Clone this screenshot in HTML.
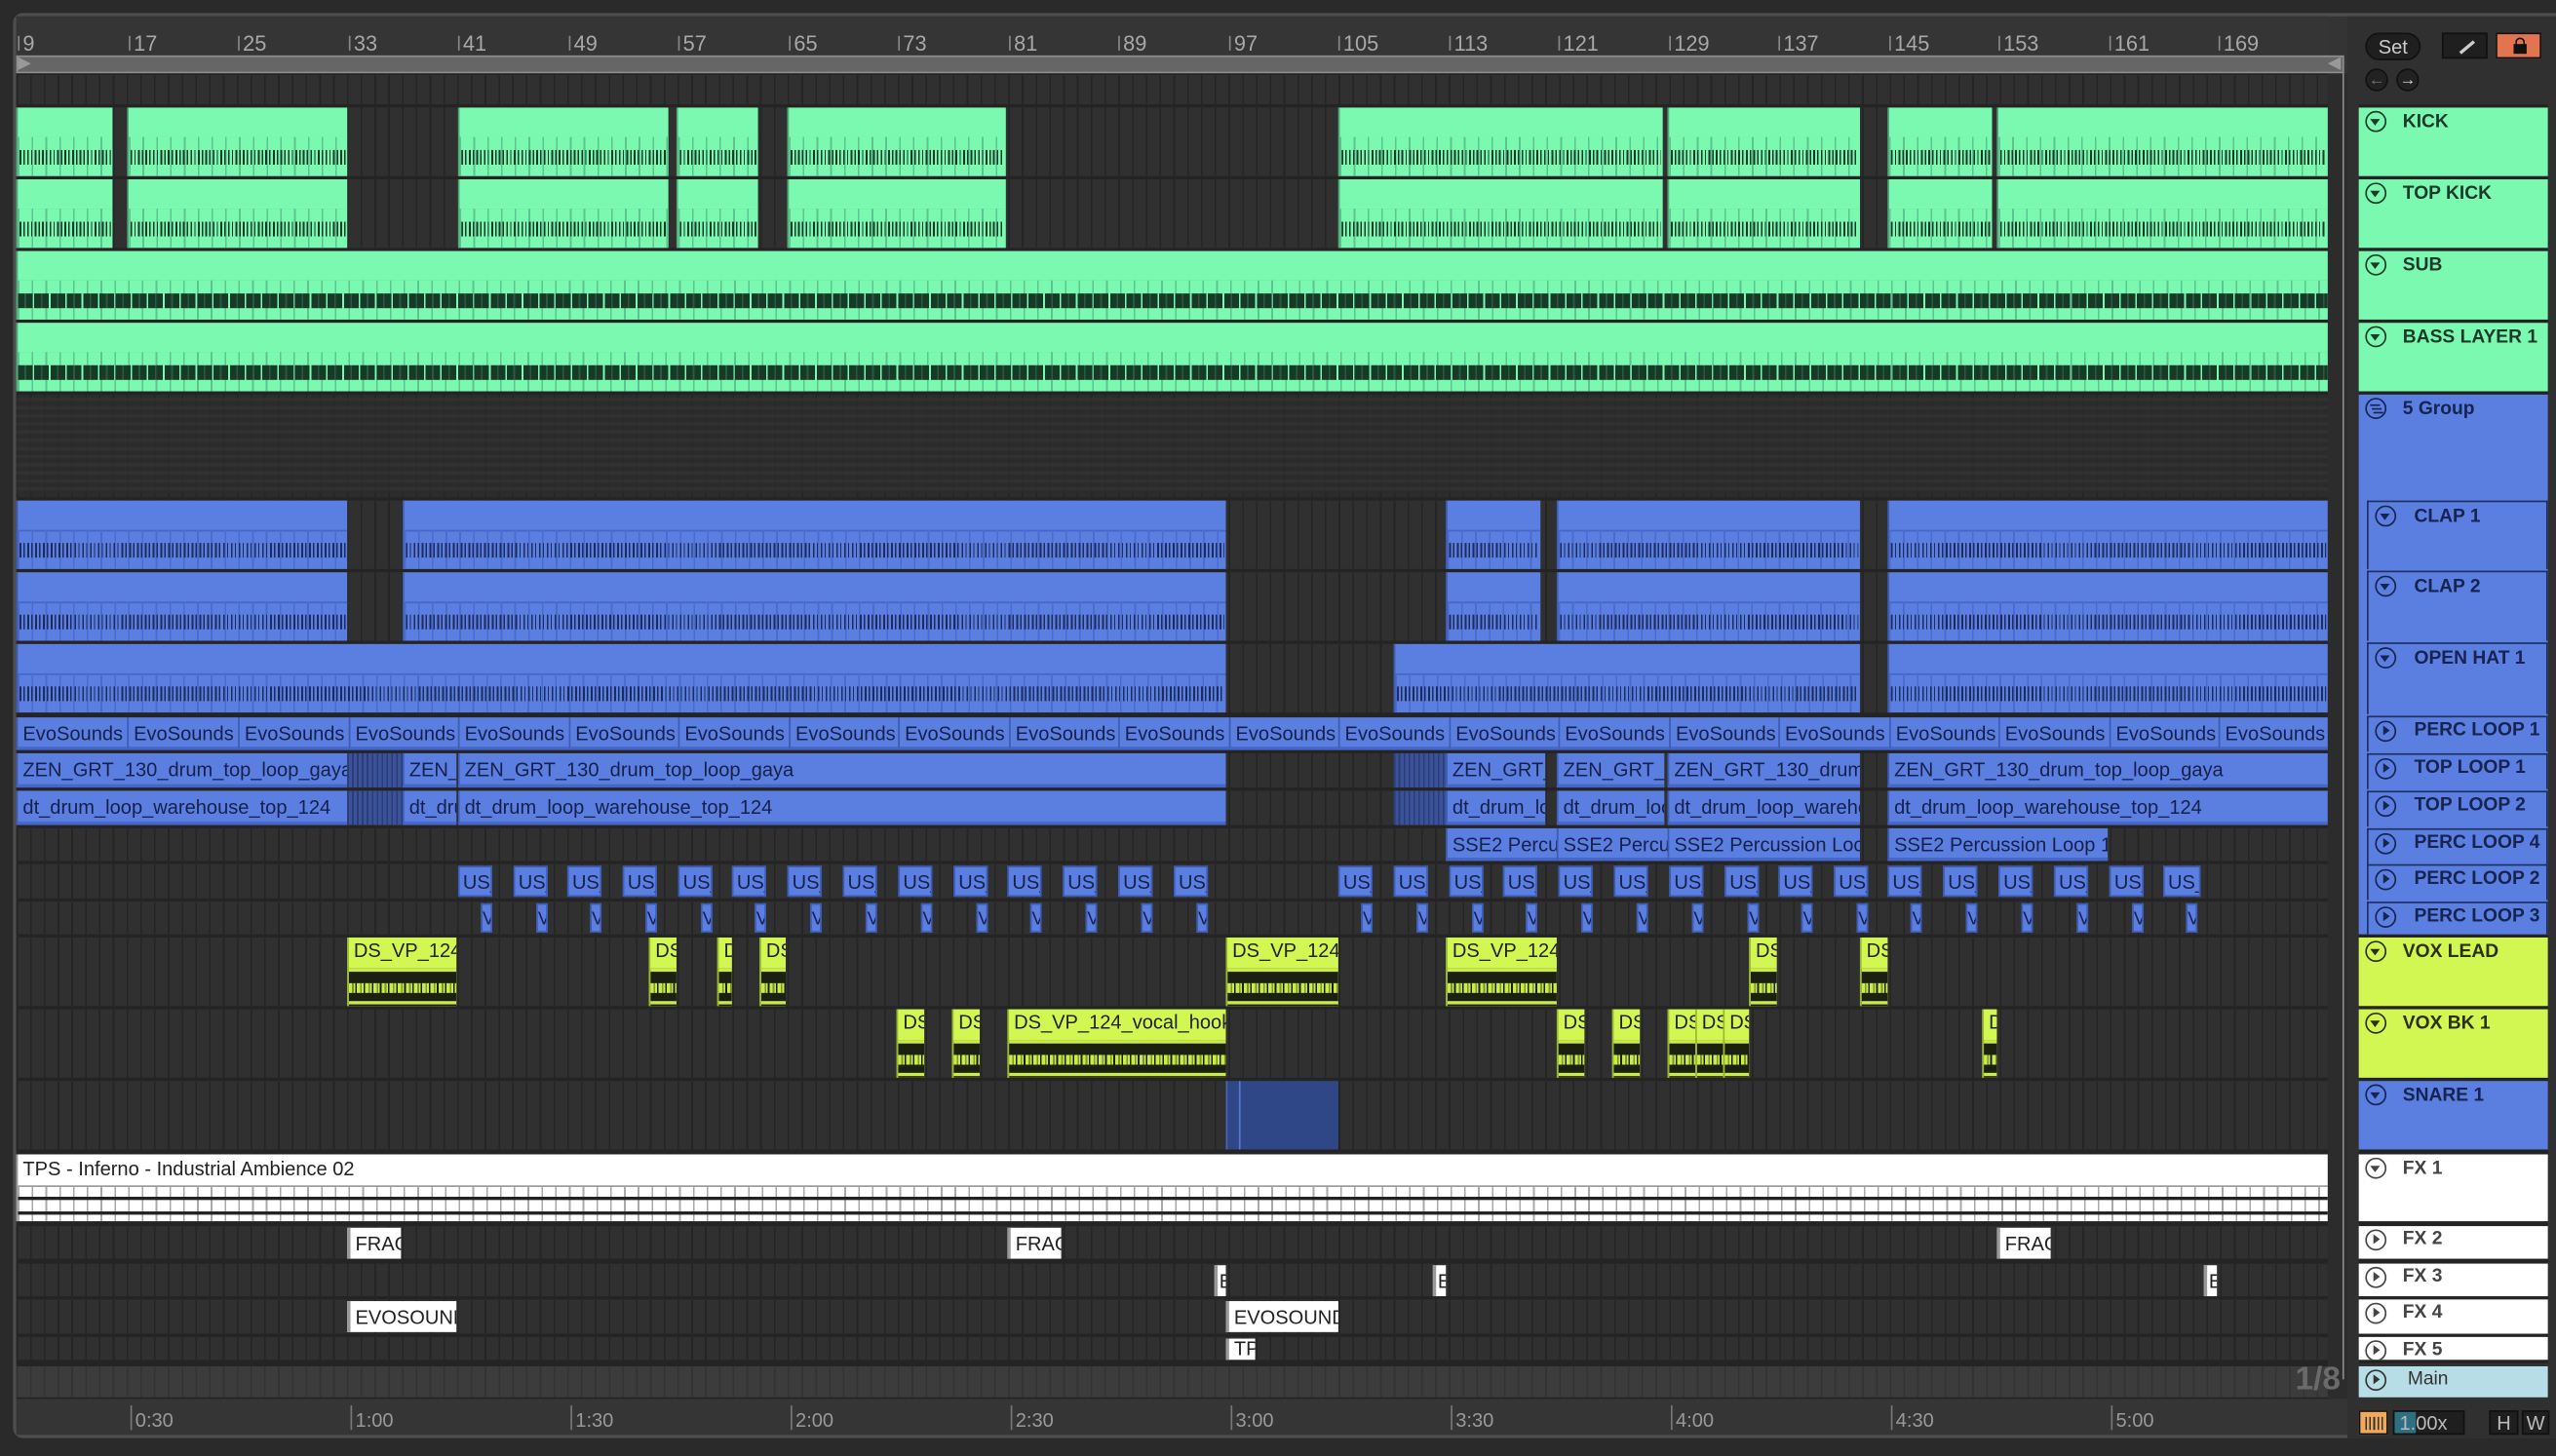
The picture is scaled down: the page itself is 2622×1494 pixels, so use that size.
<!DOCTYPE html>
<html><head><meta charset="utf-8">
<style>
html,body{margin:0;padding:0;background:#2a2a2a;overflow:hidden;width:2622px;height:1494px}
#s{position:absolute;left:0;top:0;width:1568px;height:893px;transform:scale(1.67219,1.67301);transform-origin:0 0;font-family:"Liberation Sans",sans-serif}
.a{position:absolute;box-sizing:border-box}
.row{position:absolute;left:10px;width:1418px;background:#303030 repeating-linear-gradient(90deg,#252525 0 1px,transparent 1px 8.45px);}
.c{position:absolute;box-sizing:border-box;overflow:hidden;white-space:nowrap}
.g{background:#7cf9b1;border-left:1px solid #4fa877}
.g .h{position:absolute;left:0;right:0;top:0;height:44%;background:#7cf9b1;border-bottom:1px solid #53b07d}
.g .b{position:absolute;left:0;right:0;top:44%;bottom:0;background:#7cf9b1 repeating-linear-gradient(90deg,#5cc48e 0 1px,transparent 1px 8.45px)}
.g .n{position:absolute;left:1px;right:1px;top:30%;height:40%;background:repeating-linear-gradient(90deg,#163a26 0 1.1px,transparent 1.1px 2.4px,#163a26 2.4px 3.2px,transparent 3.2px 4.6px)}
.g .nb{position:absolute;left:0;right:0;top:30%;height:40%;background:repeating-linear-gradient(90deg,#163a26 0 4px,#2a5a3e 4px 5px,#163a26 5px 9px,transparent 9px 10px)}
.bl{background:#5b7fe0;border-left:1px solid #3d5cb4}
.bl .h{position:absolute;left:0;right:0;top:0;height:44%;border-bottom:1px solid #4566c4}
.bl .b{position:absolute;left:0;right:0;top:44%;bottom:0;background:repeating-linear-gradient(90deg,#4a6cd0 0 1px,transparent 1px 8.45px)}
.bl .n{position:absolute;left:1px;right:1px;top:30%;height:40%;background:repeating-linear-gradient(90deg,#1d2c5a 0 1.1px,transparent 1.1px 2.4px,#1d2c5a 2.4px 3.2px,transparent 3.2px 4.8px)}
.t{font-size:12px;line-height:20px;padding-left:3px;color:#16204a;background:#5b7fe0;border-left:1px solid #3d5cb4;border-bottom:2px solid #4666c8}
.hatch{background:#3b5299 repeating-linear-gradient(90deg,#2b3d78 0 1px,transparent 1px 3px)}
.y{background:#d3f752;border-left:1px solid #9ab82e}
.y .l{font-size:12px;line-height:17px;padding-left:3px;color:#222}
.y .w{position:absolute;left:0;right:0;top:19px;bottom:0;background:#1c2010}
.y .w:before{content:"";position:absolute;left:0;right:0;top:40%;height:6px;background:repeating-linear-gradient(90deg,#c9ec4a 0 2px,#7d9530 2px 3px,#c9ec4a 3px 4px,#1c2010 4px 5px)}
.y .w:after{content:"";position:absolute;left:0;right:0;top:0;height:2px;background:#c9ec4a;box-shadow:0 20px 0 #c9ec4a}
.wh{background:#fff;border-left:2px solid #999;font-size:12px;line-height:20px;padding-left:3px;color:#222}
.us{font-size:12px;line-height:18px;padding-left:2px;color:#16204a;background:#5b7fe0;border:1px solid #3d5cb4}
.v{background:#5b7fe0;border:1px solid #3d5cb4;font-size:11px;color:#16204a;line-height:18px}
.rn{position:absolute;top:19px;font-size:13px;color:#a8a8a8}
.rt{position:absolute;top:22px;width:1px;height:9px;background:#888}
.tl{position:absolute;top:862px;font-size:12px;color:#999;border-left:1px solid #777;padding-left:2px;line-height:12px;padding-top:3px}
.hd{position:absolute;left:1447px;width:116px;box-sizing:border-box;font-weight:bold;font-size:11.5px;padding-left:27px;padding-top:3px;white-space:nowrap;overflow:hidden}
.ic{position:absolute;left:4px;top:2px;width:13px;height:13px;border:1.4px solid currentColor;border-radius:50%;box-sizing:border-box}
.ic.d:after{content:"";position:absolute;left:2.3px;top:3.5px;border-left:3.3px solid transparent;border-right:3.3px solid transparent;border-top:4px solid currentColor}
.ic.p:after{content:"";position:absolute;left:3.6px;top:2.2px;border-top:3.3px solid transparent;border-bottom:3.3px solid transparent;border-left:4.5px solid currentColor}
.gr{background:#7cf9b1;color:#1c3a2a}
.bh{background:#5b7fe0;color:#172350}
.yh{background:#d3f752;color:#2a3010}
.whh{background:#fff;color:#444}
.sep{position:absolute;left:1428px;width:19px;background:#2c2c2c}
</style></head><body><div id="s">
<div class="a" style="left:8px;top:8px;width:1580px;height:874px;border:2px solid #4e4e4e;border-radius:6px;background:#343434"></div>
<div class="a" style="left:10px;top:10px;width:1418px;height:24px;background:#353535"></div>
<div class="rt" style="left:11px"></div><div class="rn" style="left:14px">9</div>
<div class="rt" style="left:79px"></div><div class="rn" style="left:82px">17</div>
<div class="rt" style="left:146px"></div><div class="rn" style="left:149px">25</div>
<div class="rt" style="left:214px"></div><div class="rn" style="left:217px">33</div>
<div class="rt" style="left:281px"></div><div class="rn" style="left:284px">41</div>
<div class="rt" style="left:349px"></div><div class="rn" style="left:352px">49</div>
<div class="rt" style="left:416px"></div><div class="rn" style="left:419px">57</div>
<div class="rt" style="left:484px"></div><div class="rn" style="left:487px">65</div>
<div class="rt" style="left:551px"></div><div class="rn" style="left:554px">73</div>
<div class="rt" style="left:619px"></div><div class="rn" style="left:622px">81</div>
<div class="rt" style="left:686px"></div><div class="rn" style="left:689px">89</div>
<div class="rt" style="left:754px"></div><div class="rn" style="left:757px">97</div>
<div class="rt" style="left:821px"></div><div class="rn" style="left:824px">105</div>
<div class="rt" style="left:889px"></div><div class="rn" style="left:892px">113</div>
<div class="rt" style="left:956px"></div><div class="rn" style="left:959px">121</div>
<div class="rt" style="left:1024px"></div><div class="rn" style="left:1027px">129</div>
<div class="rt" style="left:1091px"></div><div class="rn" style="left:1094px">137</div>
<div class="rt" style="left:1159px"></div><div class="rn" style="left:1162px">145</div>
<div class="rt" style="left:1226px"></div><div class="rn" style="left:1229px">153</div>
<div class="rt" style="left:1294px"></div><div class="rn" style="left:1297px">161</div>
<div class="rt" style="left:1361px"></div><div class="rn" style="left:1364px">169</div>
<div class="a" style="left:10px;top:34px;width:1428px;height:11px;background:#666;border:1px solid #8e8e8e"></div>
<div class="a" style="left:11px;top:35px;width:0;height:0;border-top:4.5px solid transparent;border-bottom:4.5px solid transparent;border-left:8px solid #999"></div>
<div class="a" style="left:1428px;top:35px;width:0;height:0;border-top:4.5px solid transparent;border-bottom:4.5px solid transparent;border-right:8px solid #999"></div>
<div class="a" style="left:10px;top:45px;width:1418px;height:813px;background:#242424"></div>
<div class="row" style="top:46px;height:18px"></div>
<div class="row" style="top:66px;height:42px"></div>
<div class="row" style="top:110px;height:42px"></div>
<div class="row" style="top:154px;height:42px"></div>
<div class="row" style="top:198px;height:42px"></div>
<div class="row" style="top:242px;height:63px;background-color:#2c2c2c"></div>
<div class="row" style="top:307px;height:42px"></div>
<div class="row" style="top:351px;height:42px"></div>
<div class="row" style="top:395px;height:42px"></div>
<div class="row" style="top:440px;height:20px"></div>
<div class="row" style="top:462px;height:21px"></div>
<div class="row" style="top:485px;height:21px"></div>
<div class="row" style="top:508px;height:20px"></div>
<div class="row" style="top:530px;height:21px"></div>
<div class="row" style="top:553px;height:20px"></div>
<div class="row" style="top:575px;height:42px"></div>
<div class="row" style="top:619px;height:42px"></div>
<div class="row" style="top:663px;height:42px"></div>
<div class="row" style="top:708px;height:41px"></div>
<div class="row" style="top:752px;height:20px"></div>
<div class="row" style="top:775px;height:20px"></div>
<div class="row" style="top:797px;height:21px"></div>
<div class="row" style="top:820px;height:14px"></div>
<div class="row" style="top:838px;height:19px;background-color:#3c3c3c;background-image:repeating-linear-gradient(90deg,#333 0 1px,transparent 1px 8.45px)"></div>
<div class="a" style="left:10px;top:244px;width:1418px;height:59px;background:repeating-linear-gradient(180deg,#333 0 2px,#2b2b2b 2px 5px);opacity:.7"></div>

<div class="c g" style="left:10px;top:66px;width:59px;height:42px"><div class="h"></div><div class="b"><div class="n"></div></div></div>
<div class="c g" style="left:78px;top:66px;width:135px;height:42px"><div class="h"></div><div class="b"><div class="n"></div></div></div>
<div class="c g" style="left:281px;top:66px;width:129px;height:42px"><div class="h"></div><div class="b"><div class="n"></div></div></div>
<div class="c g" style="left:415px;top:66px;width:50px;height:42px"><div class="h"></div><div class="b"><div class="n"></div></div></div>
<div class="c g" style="left:483px;top:66px;width:134px;height:42px"><div class="h"></div><div class="b"><div class="n"></div></div></div>
<div class="c g" style="left:821px;top:66px;width:199px;height:42px"><div class="h"></div><div class="b"><div class="n"></div></div></div>
<div class="c g" style="left:1023px;top:66px;width:118px;height:42px"><div class="h"></div><div class="b"><div class="n"></div></div></div>
<div class="c g" style="left:1158px;top:66px;width:64px;height:42px"><div class="h"></div><div class="b"><div class="n"></div></div></div>
<div class="c g" style="left:1225px;top:66px;width:203px;height:42px"><div class="h"></div><div class="b"><div class="n"></div></div></div>

<div class="c g" style="left:10px;top:110px;width:59px;height:42px"><div class="h"></div><div class="b"><div class="n"></div></div></div>
<div class="c g" style="left:78px;top:110px;width:135px;height:42px"><div class="h"></div><div class="b"><div class="n"></div></div></div>
<div class="c g" style="left:281px;top:110px;width:129px;height:42px"><div class="h"></div><div class="b"><div class="n"></div></div></div>
<div class="c g" style="left:415px;top:110px;width:50px;height:42px"><div class="h"></div><div class="b"><div class="n"></div></div></div>
<div class="c g" style="left:483px;top:110px;width:134px;height:42px"><div class="h"></div><div class="b"><div class="n"></div></div></div>
<div class="c g" style="left:821px;top:110px;width:199px;height:42px"><div class="h"></div><div class="b"><div class="n"></div></div></div>
<div class="c g" style="left:1023px;top:110px;width:118px;height:42px"><div class="h"></div><div class="b"><div class="n"></div></div></div>
<div class="c g" style="left:1158px;top:110px;width:64px;height:42px"><div class="h"></div><div class="b"><div class="n"></div></div></div>
<div class="c g" style="left:1225px;top:110px;width:203px;height:42px"><div class="h"></div><div class="b"><div class="n"></div></div></div>
<div class="c g" style="left:10px;top:154px;width:1418px;height:42px"><div class="h"></div><div class="b"><div class="nb"></div></div></div>
<div class="c g" style="left:10px;top:198px;width:1418px;height:42px"><div class="h"></div><div class="b"><div class="nb"></div></div></div>

<div class="c bl" style="left:10px;top:307px;width:203px;height:42px"><div class="h"></div><div class="b"><div class="n"></div></div></div>
<div class="c bl" style="left:247px;top:307px;width:505px;height:42px"><div class="h"></div><div class="b"><div class="n"></div></div></div>
<div class="c bl" style="left:887px;top:307px;width:58px;height:42px"><div class="h"></div><div class="b"><div class="n"></div></div></div>
<div class="c bl" style="left:955px;top:307px;width:186px;height:42px"><div class="h"></div><div class="b"><div class="n"></div></div></div>
<div class="c bl" style="left:1158px;top:307px;width:270px;height:42px"><div class="h"></div><div class="b"><div class="n"></div></div></div>
<div class="c bl" style="left:10px;top:351px;width:203px;height:42px"><div class="h"></div><div class="b"><div class="n"></div></div></div>
<div class="c bl" style="left:247px;top:351px;width:505px;height:42px"><div class="h"></div><div class="b"><div class="n"></div></div></div>
<div class="c bl" style="left:887px;top:351px;width:58px;height:42px"><div class="h"></div><div class="b"><div class="n"></div></div></div>
<div class="c bl" style="left:955px;top:351px;width:186px;height:42px"><div class="h"></div><div class="b"><div class="n"></div></div></div>
<div class="c bl" style="left:1158px;top:351px;width:270px;height:42px"><div class="h"></div><div class="b"><div class="n"></div></div></div>
<div class="c bl" style="left:10px;top:395px;width:742px;height:42px"><div class="h"></div><div class="b"><div class="n"></div></div></div>
<div class="c bl" style="left:855px;top:395px;width:286px;height:42px"><div class="h"></div><div class="b"><div class="n"></div></div></div>
<div class="c bl" style="left:1158px;top:395px;width:270px;height:42px"><div class="h"></div><div class="b"><div class="n"></div></div></div>

<div class="c t" style="left:10px;top:440px;width:68px;height:20px">EvoSounds</div>
<div class="c t" style="left:78px;top:440px;width:68px;height:20px">EvoSounds</div>
<div class="c t" style="left:146px;top:440px;width:68px;height:20px">EvoSounds</div>
<div class="c t" style="left:214px;top:440px;width:67px;height:20px">EvoSounds</div>
<div class="c t" style="left:281px;top:440px;width:68px;height:20px">EvoSounds</div>
<div class="c t" style="left:349px;top:440px;width:67px;height:20px">EvoSounds</div>
<div class="c t" style="left:416px;top:440px;width:68px;height:20px">EvoSounds</div>
<div class="c t" style="left:484px;top:440px;width:67px;height:20px">EvoSounds</div>
<div class="c t" style="left:551px;top:440px;width:68px;height:20px">EvoSounds</div>
<div class="c t" style="left:619px;top:440px;width:67px;height:20px">EvoSounds</div>
<div class="c t" style="left:686px;top:440px;width:68px;height:20px">EvoSounds</div>
<div class="c t" style="left:754px;top:440px;width:67px;height:20px">EvoSounds</div>
<div class="c t" style="left:821px;top:440px;width:68px;height:20px">EvoSounds</div>
<div class="c t" style="left:889px;top:440px;width:67px;height:20px">EvoSounds</div>
<div class="c t" style="left:956px;top:440px;width:68px;height:20px">EvoSounds</div>
<div class="c t" style="left:1024px;top:440px;width:67px;height:20px">EvoSounds</div>
<div class="c t" style="left:1091px;top:440px;width:68px;height:20px">EvoSounds</div>
<div class="c t" style="left:1159px;top:440px;width:67px;height:20px">EvoSounds</div>
<div class="c t" style="left:1226px;top:440px;width:68px;height:20px">EvoSounds</div>
<div class="c t" style="left:1294px;top:440px;width:67px;height:20px">EvoSounds</div>
<div class="c t" style="left:1361px;top:440px;width:67px;height:20px">EvoSounds</div>
<div class="c t" style="left:10px;top:462px;width:203px;height:21px">ZEN_GRT_130_drum_top_loop_gaya</div>
<div class="c hatch" style="left:213px;top:462px;width:34px;height:21px"></div>
<div class="c t" style="left:247px;top:462px;width:33px;height:21px">ZEN_</div>
<div class="c t" style="left:281px;top:462px;width:471px;height:21px">ZEN_GRT_130_drum_top_loop_gaya</div>
<div class="c hatch" style="left:855px;top:462px;width:32px;height:21px"></div>
<div class="c t" style="left:887px;top:462px;width:61px;height:21px">ZEN_GRT_130</div>
<div class="c t" style="left:955px;top:462px;width:66px;height:21px">ZEN_GRT_130</div>
<div class="c t" style="left:1023px;top:462px;width:118px;height:21px">ZEN_GRT_130_drum_top</div>
<div class="c t" style="left:1158px;top:462px;width:270px;height:21px">ZEN_GRT_130_drum_top_loop_gaya</div>
<div class="c t" style="left:10px;top:485px;width:203px;height:21px">dt_drum_loop_warehouse_top_124</div>
<div class="c hatch" style="left:213px;top:485px;width:34px;height:21px"></div>
<div class="c t" style="left:247px;top:485px;width:33px;height:21px">dt_drum</div>
<div class="c t" style="left:281px;top:485px;width:471px;height:21px">dt_drum_loop_warehouse_top_124</div>
<div class="c hatch" style="left:855px;top:485px;width:32px;height:21px"></div>
<div class="c t" style="left:887px;top:485px;width:61px;height:21px">dt_drum_loop</div>
<div class="c t" style="left:955px;top:485px;width:66px;height:21px">dt_drum_loop</div>
<div class="c t" style="left:1023px;top:485px;width:118px;height:21px">dt_drum_loop_warehouse</div>
<div class="c t" style="left:1158px;top:485px;width:270px;height:21px">dt_drum_loop_warehouse_top_124</div>
<div class="c t" style="left:887px;top:508px;width:68px;height:20px">SSE2 Percussion</div>
<div class="c t" style="left:955px;top:508px;width:68px;height:20px">SSE2 Percussion</div>
<div class="c t" style="left:1023px;top:508px;width:118px;height:20px">SSE2 Percussion Loop 1</div>
<div class="c t" style="left:1158px;top:508px;width:135px;height:20px">SSE2 Percussion Loop 1</div>
<div class="c us" style="left:281px;top:531px;width:21px;height:19px">US_</div>
<div class="c us" style="left:315px;top:531px;width:21px;height:19px">US_</div>
<div class="c us" style="left:348px;top:531px;width:21px;height:19px">US_</div>
<div class="c us" style="left:382px;top:531px;width:21px;height:19px">US_</div>
<div class="c us" style="left:416px;top:531px;width:21px;height:19px">US_</div>
<div class="c us" style="left:449px;top:531px;width:21px;height:19px">US_</div>
<div class="c us" style="left:483px;top:531px;width:21px;height:19px">US_</div>
<div class="c us" style="left:517px;top:531px;width:21px;height:19px">US_</div>
<div class="c us" style="left:551px;top:531px;width:21px;height:19px">US_</div>
<div class="c us" style="left:585px;top:531px;width:21px;height:19px">US_</div>
<div class="c us" style="left:618px;top:531px;width:21px;height:19px">US_</div>
<div class="c us" style="left:652px;top:531px;width:21px;height:19px">US_</div>
<div class="c us" style="left:686px;top:531px;width:21px;height:19px">US_</div>
<div class="c us" style="left:720px;top:531px;width:21px;height:19px">US_</div>
<div class="c us" style="left:821px;top:531px;width:21px;height:19px">US_</div>
<div class="c us" style="left:855px;top:531px;width:21px;height:19px">US_</div>
<div class="c us" style="left:889px;top:531px;width:21px;height:19px">US_</div>
<div class="c us" style="left:922px;top:531px;width:21px;height:19px">US_</div>
<div class="c us" style="left:956px;top:531px;width:21px;height:19px">US_</div>
<div class="c us" style="left:990px;top:531px;width:21px;height:19px">US_</div>
<div class="c us" style="left:1024px;top:531px;width:21px;height:19px">US_</div>
<div class="c us" style="left:1058px;top:531px;width:21px;height:19px">US_</div>
<div class="c us" style="left:1091px;top:531px;width:21px;height:19px">US_</div>
<div class="c us" style="left:1125px;top:531px;width:21px;height:19px">US_</div>
<div class="c us" style="left:1158px;top:531px;width:21px;height:19px">US_</div>
<div class="c us" style="left:1192px;top:531px;width:21px;height:19px">US_</div>
<div class="c us" style="left:1226px;top:531px;width:21px;height:19px">US_</div>
<div class="c us" style="left:1260px;top:531px;width:21px;height:19px">US_</div>
<div class="c us" style="left:1294px;top:531px;width:21px;height:19px">US_</div>
<div class="c us" style="left:1327px;top:531px;width:23px;height:19px">US_</div>
<div class="c v" style="left:295px;top:554px;width:7px;height:18px">V</div>
<div class="c v" style="left:329px;top:554px;width:7px;height:18px">V</div>
<div class="c v" style="left:362px;top:554px;width:7px;height:18px">V</div>
<div class="c v" style="left:396px;top:554px;width:7px;height:18px">V</div>
<div class="c v" style="left:430px;top:554px;width:7px;height:18px">V</div>
<div class="c v" style="left:463px;top:554px;width:7px;height:18px">V</div>
<div class="c v" style="left:497px;top:554px;width:7px;height:18px">V</div>
<div class="c v" style="left:531px;top:554px;width:7px;height:18px">V</div>
<div class="c v" style="left:565px;top:554px;width:7px;height:18px">V</div>
<div class="c v" style="left:599px;top:554px;width:7px;height:18px">V</div>
<div class="c v" style="left:632px;top:554px;width:7px;height:18px">V</div>
<div class="c v" style="left:666px;top:554px;width:7px;height:18px">V</div>
<div class="c v" style="left:700px;top:554px;width:7px;height:18px">V</div>
<div class="c v" style="left:734px;top:554px;width:7px;height:18px">V</div>
<div class="c v" style="left:835px;top:554px;width:7px;height:18px">V</div>
<div class="c v" style="left:869px;top:554px;width:7px;height:18px">V</div>
<div class="c v" style="left:903px;top:554px;width:7px;height:18px">V</div>
<div class="c v" style="left:936px;top:554px;width:7px;height:18px">V</div>
<div class="c v" style="left:970px;top:554px;width:7px;height:18px">V</div>
<div class="c v" style="left:1004px;top:554px;width:7px;height:18px">V</div>
<div class="c v" style="left:1038px;top:554px;width:7px;height:18px">V</div>
<div class="c v" style="left:1072px;top:554px;width:7px;height:18px">V</div>
<div class="c v" style="left:1105px;top:554px;width:7px;height:18px">V</div>
<div class="c v" style="left:1139px;top:554px;width:7px;height:18px">V</div>
<div class="c v" style="left:1172px;top:554px;width:7px;height:18px">V</div>
<div class="c v" style="left:1206px;top:554px;width:7px;height:18px">V</div>
<div class="c v" style="left:1240px;top:554px;width:7px;height:18px">V</div>
<div class="c v" style="left:1274px;top:554px;width:7px;height:18px">V</div>
<div class="c v" style="left:1308px;top:554px;width:7px;height:18px">V</div>
<div class="c v" style="left:1341px;top:554px;width:7px;height:18px">V</div>
<div class="c y" style="left:213px;top:575px;width:67px;height:42px"><div class="l">DS_VP_124</div><div class="w"></div></div>
<div class="c y" style="left:398px;top:575px;width:17px;height:42px"><div class="l">DS</div><div class="w"></div></div>
<div class="c y" style="left:440px;top:575px;width:9px;height:42px"><div class="l">D</div><div class="w"></div></div>
<div class="c y" style="left:466px;top:575px;width:16px;height:42px"><div class="l">DS</div><div class="w"></div></div>
<div class="c y" style="left:752px;top:575px;width:69px;height:42px"><div class="l">DS_VP_124</div><div class="w"></div></div>
<div class="c y" style="left:887px;top:575px;width:68px;height:42px"><div class="l">DS_VP_124</div><div class="w"></div></div>
<div class="c y" style="left:1073px;top:575px;width:17px;height:42px"><div class="l">DS</div><div class="w"></div></div>
<div class="c y" style="left:1141px;top:575px;width:17px;height:42px"><div class="l">DS</div><div class="w"></div></div>
<div class="c y" style="left:550px;top:619px;width:17px;height:42px"><div class="l">DS</div><div class="w"></div></div>
<div class="c y" style="left:584px;top:619px;width:17px;height:42px"><div class="l">DS</div><div class="w"></div></div>
<div class="c y" style="left:618px;top:619px;width:134px;height:42px"><div class="l">DS_VP_124_vocal_hook</div><div class="w"></div></div>
<div class="c y" style="left:955px;top:619px;width:17px;height:42px"><div class="l">DS</div><div class="w"></div></div>
<div class="c y" style="left:989px;top:619px;width:17px;height:42px"><div class="l">DS</div><div class="w"></div></div>
<div class="c y" style="left:1023px;top:619px;width:17px;height:42px"><div class="l">DS</div><div class="w"></div></div>
<div class="c y" style="left:1040px;top:619px;width:17px;height:42px"><div class="l">DS</div><div class="w"></div></div>
<div class="c y" style="left:1057px;top:619px;width:16px;height:42px"><div class="l">DS</div><div class="w"></div></div>
<div class="c y" style="left:1216px;top:619px;width:9px;height:42px"><div class="l">D</div><div class="w"></div></div>
<div class="c" style="left:752px;top:663px;width:69px;height:42px;background:#2f4787;border-left:1px solid #4a64b0"></div>
<div class="a" style="left:760px;top:663px;width:1px;height:42px;background:#5a78d0"></div>
<div class="c" style="left:10px;top:708px;width:1418px;height:41px;background:#fff;border-left:1px solid #999">
<div style="font-size:12px;line-height:19px;padding-left:3px;color:#222;height:19px;border-bottom:1px solid #999">TPS - Inferno - Industrial Ambience 02</div>
<div style="position:absolute;left:0;right:0;top:20px;bottom:0;background:repeating-linear-gradient(90deg,#aaa 0 1px,transparent 1px 8.45px)"></div>
<div style="position:absolute;left:0;right:0;top:26px;height:2px;background:#222"></div>
<div style="position:absolute;left:0;right:0;top:35px;height:2px;background:#222"></div>
</div>
<div class="c wh" style="left:213px;top:753px;width:33px;height:19px">FRAG</div>
<div class="c wh" style="left:618px;top:753px;width:33px;height:19px">FRAG</div>
<div class="c wh" style="left:1225px;top:753px;width:33px;height:19px">FRAG</div>
<div class="c wh" style="left:745px;top:776px;width:7px;height:19px;padding-left:1px">E</div>
<div class="c wh" style="left:879px;top:776px;width:8px;height:19px;padding-left:1px">E</div>
<div class="c wh" style="left:1352px;top:776px;width:8px;height:19px;padding-left:1px">E</div>
<div class="c wh" style="left:213px;top:798px;width:67px;height:19px">EVOSOUNDS</div>
<div class="c wh" style="left:752px;top:798px;width:69px;height:19px">EVOSOUNDS</div>
<div class="c wh" style="left:752px;top:821px;width:18px;height:13px;line-height:13px">TPS</div>
<div class="sep" style="top:45px;height:813px"></div>
<div class="a" style="left:1408px;top:835px;font-size:20px;font-weight:bold;color:#6a6a6a">1/8</div>
<div class="a" style="left:1437px;top:34px;width:1px;height:812px;background:#8a8a8a"></div>
<div class="a" style="left:10px;top:858px;width:1438px;height:22px;background:#353535"></div>
<div class="tl" style="left:80px">0:30</div><div class="tl" style="left:215px">1:00</div><div class="tl" style="left:350px">1:30</div><div class="tl" style="left:485px">2:00</div><div class="tl" style="left:620px">2:30</div><div class="tl" style="left:755px">3:00</div><div class="tl" style="left:890px">3:30</div><div class="tl" style="left:1025px">4:00</div><div class="tl" style="left:1160px">4:30</div><div class="tl" style="left:1295px">5:00</div>

<div class="a" style="left:1440px;top:10px;width:128px;height:872px;background:#303030"></div>
<div class="a" style="left:1451px;top:20px;width:34px;height:17px;border-radius:9px;background:#1f1f1f;border:1px solid #111;color:#ccc;font-size:12px;text-align:center;line-height:16px">Set</div>
<div class="a" style="left:1498px;top:20px;width:28px;height:16px;background:#1f1f1f;border:1px solid #111"><div style="position:absolute;left:9px;top:7px;width:11px;height:2px;background:#ccc;transform:rotate(-40deg)"></div></div>
<div class="a" style="left:1531px;top:20px;width:28px;height:16px;background:#e2744f;border:1px solid #111"><div style="position:absolute;left:10px;top:6px;width:8px;height:6px;background:#111"></div><div style="position:absolute;left:11px;top:2px;width:4px;height:5px;border:1.5px solid #111;border-bottom:none;border-radius:3px 3px 0 0"></div></div>
<div class="a" style="left:1451px;top:42px;width:14px;height:14px;border-radius:50%;background:#222;border:1px solid #111;color:#777;font-size:10px;text-align:center;line-height:14px">&#8592;</div>
<div class="a" style="left:1470px;top:42px;width:14px;height:14px;border-radius:50%;background:#222;border:1px solid #111;color:#ddd;font-size:10px;text-align:center;line-height:14px">&#8594;</div>

<div class="a" style="left:1447px;top:64px;width:116px;height:772px;background:#232323"></div>
<div class="hd gr" style="top:66px;height:42px"><span class="ic d"></span>KICK</div>
<div class="hd gr" style="top:110px;height:42px"><span class="ic d"></span>TOP KICK</div>
<div class="hd gr" style="top:154px;height:42px"><span class="ic d"></span>SUB</div>
<div class="hd gr" style="top:198px;height:42px"><span class="ic d"></span>BASS LAYER 1</div>
<div class="hd bh" style="top:242px;height:331px"><span class="ic"><span style="position:absolute;left:2px;top:2.5px;width:6px;height:1.2px;background:currentColor;box-shadow:1px 2.3px 0 currentColor,2px 4.6px 0 currentColor"></span></span>5 Group</div>
<div class="hd bh" style="left:1452px;width:111px;top:307px;height:42px;border:1px solid #1f2f60;border-bottom:none;padding-left:28px"><span class="ic d"></span>CLAP 1</div>
<div class="hd bh" style="left:1452px;width:111px;top:350px;height:43px;border:1px solid #1f2f60;border-bottom:none;padding-left:28px"><span class="ic d"></span>CLAP 2</div>
<div class="hd bh" style="left:1452px;width:111px;top:394px;height:44px;border:1px solid #1f2f60;border-bottom:none;padding-left:28px"><span class="ic d"></span>OPEN HAT 1</div>
<div class="hd bh" style="left:1452px;width:111px;top:439px;height:22px;border:1px solid #1f2f60;border-bottom:none;padding-left:28px;padding-top:2px"><span class="ic p" style="top:2px"></span>PERC LOOP 1</div>
<div class="hd bh" style="left:1452px;width:111px;top:462px;height:22px;border:1px solid #1f2f60;border-bottom:none;padding-left:28px;padding-top:2px"><span class="ic p" style="top:2px"></span>TOP LOOP 1</div>
<div class="hd bh" style="left:1452px;width:111px;top:485px;height:22px;border:1px solid #1f2f60;border-bottom:none;padding-left:28px;padding-top:2px"><span class="ic p" style="top:2px"></span>TOP LOOP 2</div>
<div class="hd bh" style="left:1452px;width:111px;top:508px;height:22px;border:1px solid #1f2f60;border-bottom:none;padding-left:28px;padding-top:2px"><span class="ic p" style="top:2px"></span>PERC LOOP 4</div>
<div class="hd bh" style="left:1452px;width:111px;top:530px;height:22px;border:1px solid #1f2f60;border-bottom:none;padding-left:28px;padding-top:2px"><span class="ic p" style="top:2px"></span>PERC LOOP 2</div>
<div class="hd bh" style="left:1452px;width:111px;top:553px;height:20px;border:1px solid #1f2f60;border-bottom:none;padding-left:28px;padding-top:2px"><span class="ic p" style="top:2px"></span>PERC LOOP 3</div>
<div class="hd yh" style="top:575px;height:42px"><span class="ic d"></span>VOX LEAD</div>
<div class="hd yh" style="top:619px;height:42px"><span class="ic d"></span>VOX BK 1</div>
<div class="hd bh" style="top:663px;height:42px"><span class="ic d"></span>SNARE 1</div>
<div class="hd whh" style="top:708px;height:41px"><span class="ic d"></span>FX 1</div>
<div class="hd whh" style="top:752px;height:20px;padding-top:2px"><span class="ic p" style="top:2px"></span>FX 2</div>
<div class="hd whh" style="top:775px;height:20px;padding-top:2px"><span class="ic p" style="top:2px"></span>FX 3</div>
<div class="hd whh" style="top:797px;height:21px;padding-top:2px"><span class="ic p" style="top:2px"></span>FX 4</div>
<div class="hd whh" style="top:820px;height:14px;padding-top:2px"><span class="ic p" style="top:2px"></span>FX 5</div>
<div class="hd" style="top:838px;height:19px;background:#b7dde6;color:#333;font-weight:normal;padding-left:30px;padding-top:2px"><span class="ic p" style="top:2px"></span>Main</div>

<div class="a" style="left:1447px;top:865px;width:18px;height:15px;background:#f1a95c;border:1px solid #111"><div style="position:absolute;left:3px;top:3px;width:11px;height:8px;background:repeating-linear-gradient(90deg,#333 0 1px,transparent 1px 2.5px)"></div></div>
<div class="a" style="left:1468px;top:865px;width:44px;height:15px;background:#1f1f1f;border:1px solid #111;color:#bbb;font-size:12px;line-height:14px;padding-left:3px"><div style="position:absolute;left:0;top:0;width:13px;height:13px;background:#2f6f82"></div><span style="position:relative">1.00x</span></div>
<div class="a" style="left:1527px;top:865px;width:18px;height:15px;background:#1f1f1f;border:1px solid #111;color:#bbb;font-size:12px;text-align:center;line-height:14px">H</div>
<div class="a" style="left:1547px;top:865px;width:17px;height:15px;background:#1f1f1f;border:1px solid #111;color:#bbb;font-size:12px;text-align:center;line-height:14px">W</div>
<div class="a" style="left:0;top:884px;width:1568px;height:9px;background:#2a2a2a"></div>
</div></body></html>
